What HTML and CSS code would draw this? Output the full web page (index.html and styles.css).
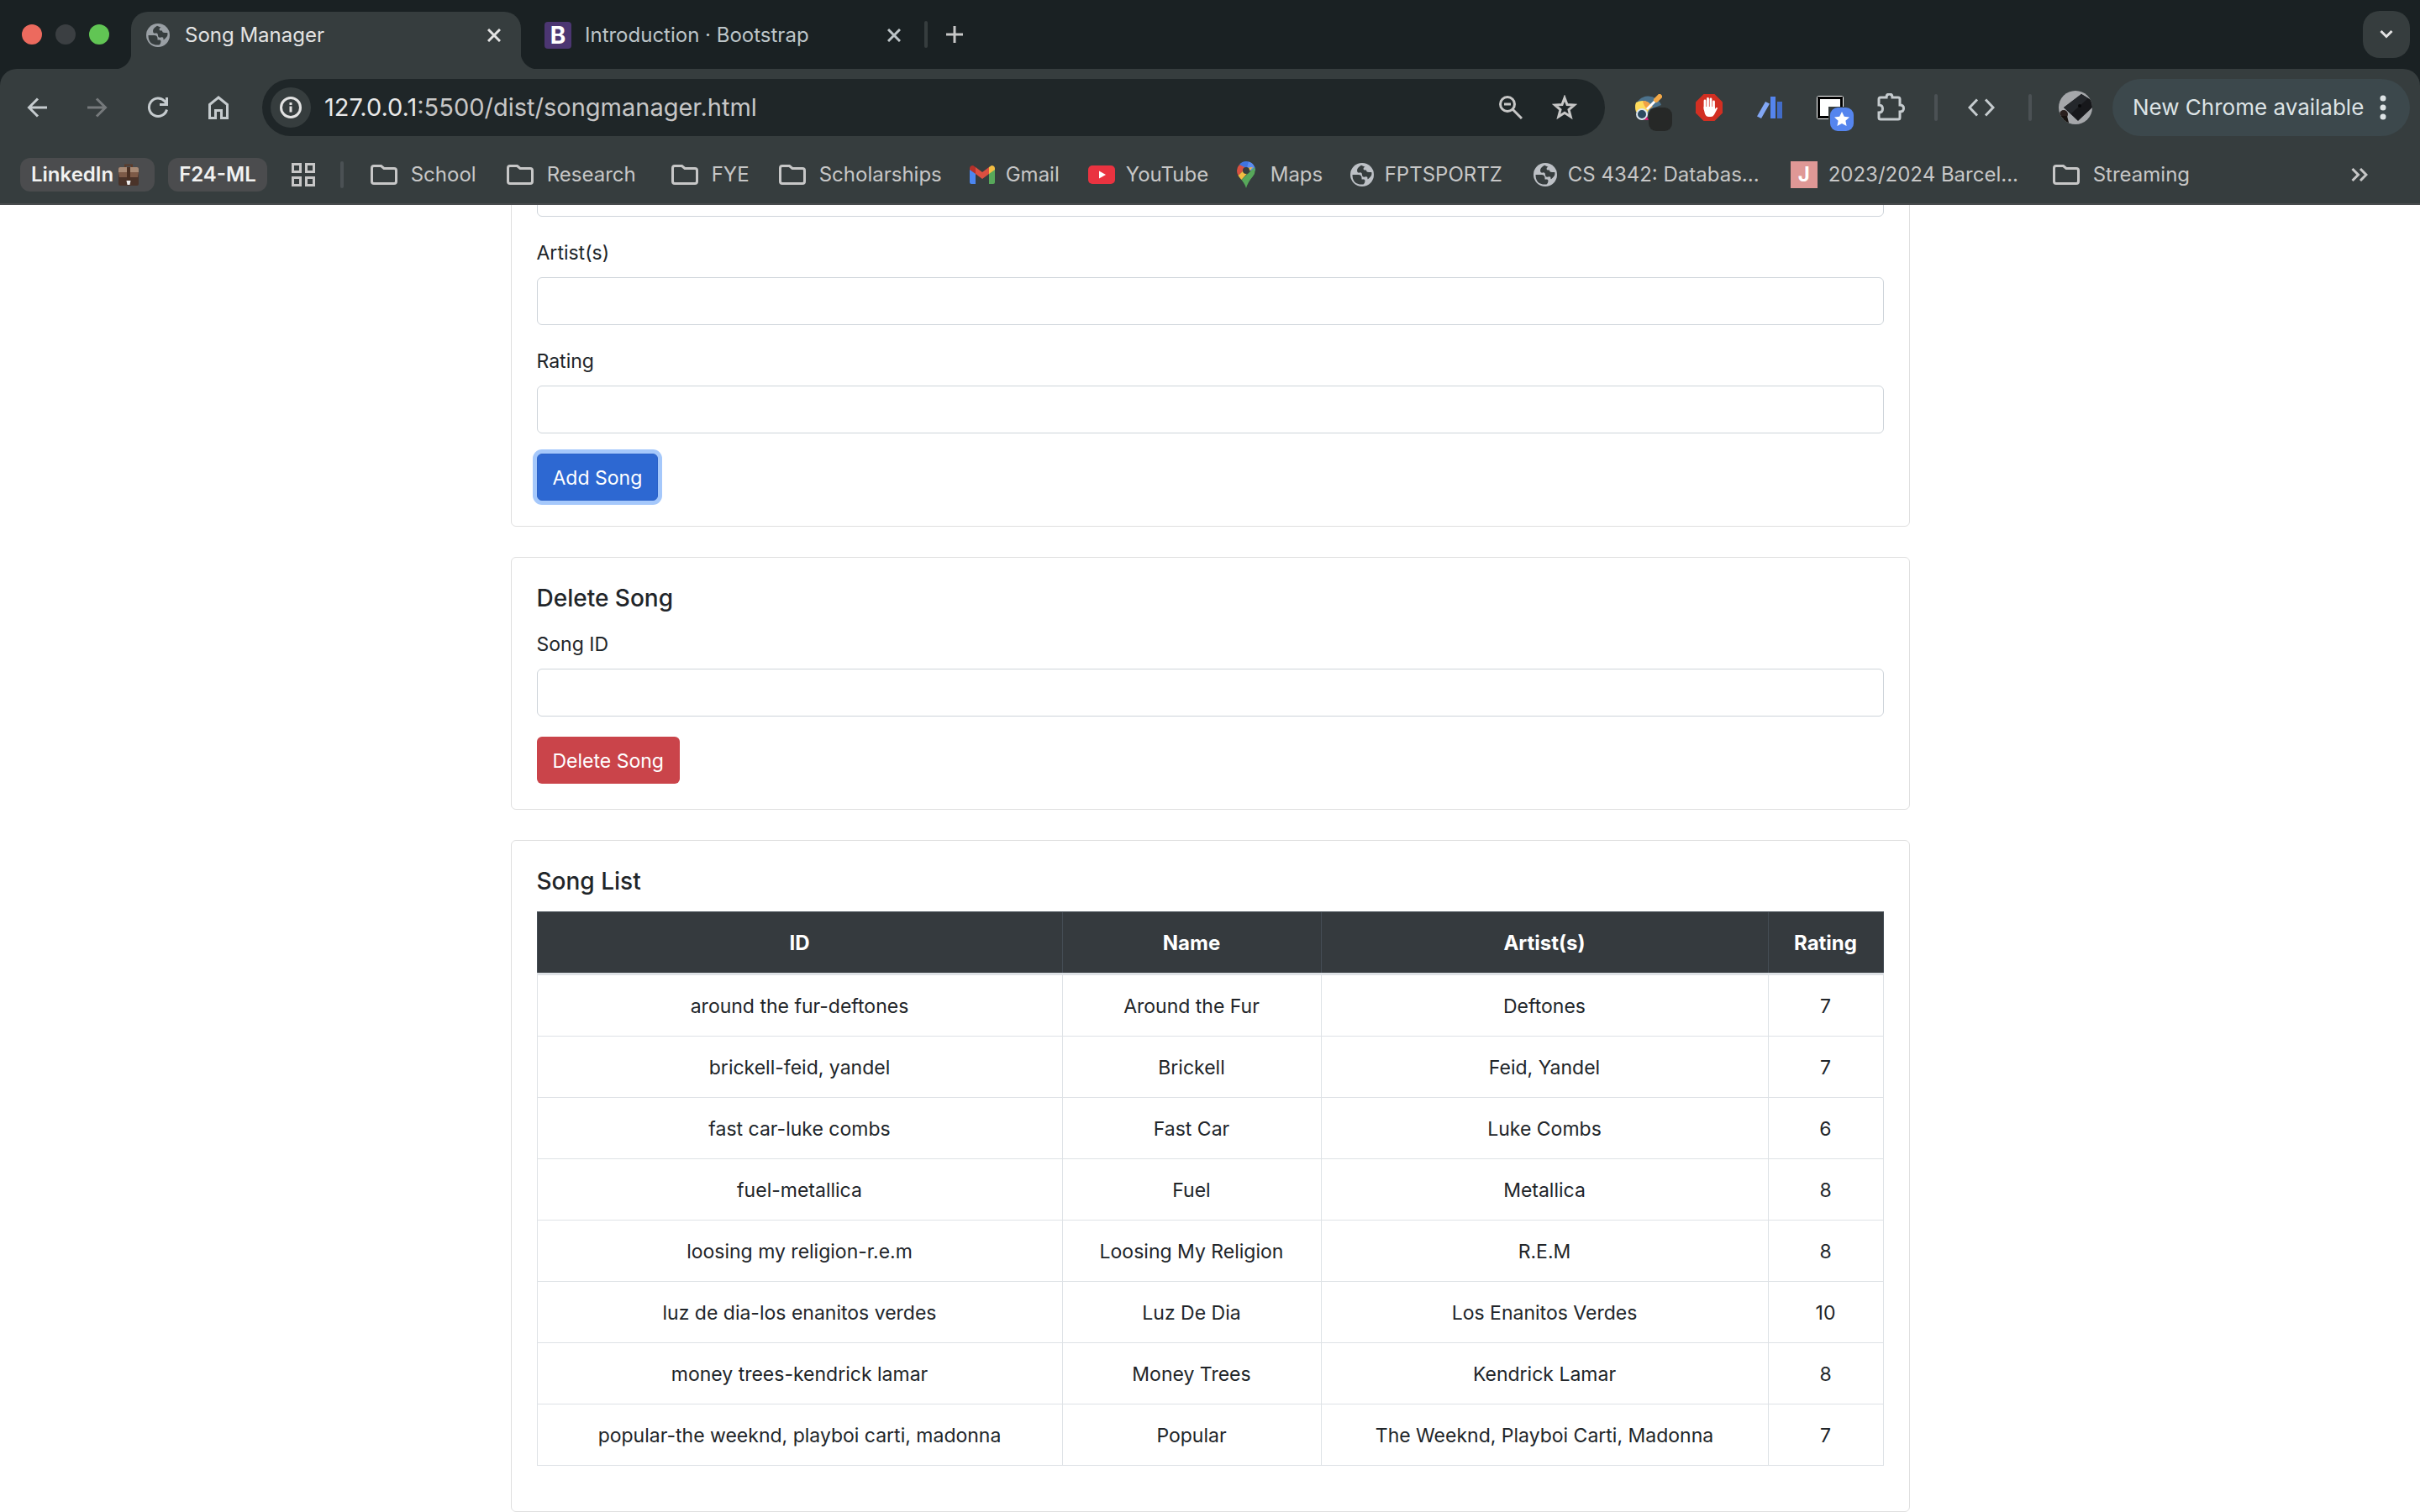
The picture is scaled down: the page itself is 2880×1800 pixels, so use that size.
FILE: index.html
```html
<!DOCTYPE html>
<html lang="en">
<head>
<meta charset="utf-8">
<title>Song Manager</title>
<link rel="stylesheet" href="styles.css">
</head>
<body>
<svg class="defs" aria-hidden="true">
  <symbol id="globe" viewBox="0 0 28 28">
    <circle cx="14" cy="14" r="14" fill="currentColor"/>
    <path class="land" d="M2.500 14h7q4 0 4 4v1.500h2.500q1.500 0 1.500 2t-2 4q-13 1-13-11.500z"/>
    <path class="land" d="M13 2.800q-5 3-5 6.200t3 2.500t3 2.500t3.500 2.500t3 2t4.500-3.500q.8-2.200.3-4h-3.300q-3 0-3-2.500q-3.500.5-3.500-1.500t2-2.200z"/>
  </symbol>
  <symbol id="folder" viewBox="0 0 32 24">
    <path d="M1.500 4v16q0 2.500 2.500 2.500h24q2.500 0 2.500-2.500v-13q0-2.500-2.500-2.500h-12l-3.500-3h-8.500q-2.500 0-2.500 2.500z" fill="none" stroke="currentColor" stroke-width="3"/>
  </symbol>
  <symbol id="cross" viewBox="0 0 16 16">
    <path d="M1 1l14 14M15 1l-14 14" stroke="currentColor" stroke-width="3"/>
  </symbol>
</svg>

<header class="browser">
  <div class="tabstrip">
    <div class="lights">
      <span class="light close"></span><span class="light idle"></span><span class="light grow"></span>
    </div>
    <div class="tab active">
      <svg class="favicon muted" width="28" height="28"><use href="#globe"/></svg>
      <span class="tab-title">Song Manager</span>
      <button class="plain" aria-label="Close tab"><svg width="16" height="16"><use href="#cross"/></svg></button>
    </div>
    <div class="tab">
      <span class="boot">B</span>
      <span class="tab-title">Introduction · Bootstrap</span>
      <button class="plain" aria-label="Close tab"><svg width="16" height="16"><use href="#cross"/></svg></button>
    </div>
    <span class="rule"></span>
    <button class="plain new-tab" aria-label="New tab"><svg width="20" height="20" viewBox="0 0 20 20"><path d="M10 0v20M0 10h20" stroke="currentColor" stroke-width="3"/></svg></button>
    <button class="tab-search" aria-label="Search tabs"><svg width="16" height="12" viewBox="0 0 16 12"><path d="M1.500 2l6.500 6.500l6.500-6.500" fill="none" stroke="currentColor" stroke-width="3"/></svg></button>
  </div>

  <div class="toolbar">
    <button class="tool" aria-label="Back"><svg width="24" height="24" viewBox="0 0 24 24"><path d="M24 12H3M13 1.500L2.500 12L13 22.500" fill="none" stroke="currentColor" stroke-width="3"/></svg></button>
    <button class="tool dim" aria-label="Forward"><svg width="24" height="24" viewBox="0 0 24 24"><path d="M0 12h21M11 1.500L21.500 12L11 22.500" fill="none" stroke="currentColor" stroke-width="3"/></svg></button>
    <button class="tool" aria-label="Reload"><svg width="26" height="26" viewBox="0 0 26 26"><path d="M23.500 15.500A10.700 10.700 0 1 1 21 5.500l2.500 3M23.500 1v8.500h-8.500" fill="none" stroke="currentColor" stroke-width="3"/></svg></button>
    <button class="tool" aria-label="Home"><svg width="24" height="28" viewBox="0 0 24 28"><path d="M1.500 10.500L12 2l10.500 8.500V26.500h-7v-9h-7v9h-7z" fill="none" stroke="currentColor" stroke-width="3"/></svg></button>
    <div class="omnibox">
      <button class="site-info" aria-label="Site information"><svg width="26" height="26" viewBox="0 0 26 26"><circle cx="13" cy="13" r="11.500" fill="none" stroke="currentColor" stroke-width="3"/><path d="M13 11.500v7M13 7v3" stroke="currentColor" stroke-width="3"/></svg></button>
      <div class="url"><span class="host">127.0.0.1</span>:5500/dist/songmanager.html</div>
      <button class="in-box" aria-label="Zoom"><svg width="28" height="28" viewBox="0 0 28 28"><circle cx="10" cy="10" r="8.500" fill="none" stroke="currentColor" stroke-width="3"/><path d="M6 10h8M16 16l11 11" stroke="currentColor" stroke-width="3"/></svg></button>
      <button class="in-box" aria-label="Bookmark this page"><svg width="30" height="30" viewBox="0 0 30 30"><path d="M15 3.500l3 8l8.500.5l-6.500 5.500l2.200 8.500l-7.200-4.700l-7.200 4.700l2.200-8.500l-6.500-5.500l8.500-.5z" fill="none" stroke="currentColor" stroke-width="3"/></svg></button>
    </div>
    <div class="extensions">
      <button class="tool" aria-label="Palette extension"><svg width="32" height="32" viewBox="0 0 32 32"><path d="M0 15A16 15 0 0 1 31 13L18 18L13 28L6 28Q0 22 0 15z" fill="#4d738d"/><path d="M1 10q8-4 15 0l4 5l-4 4l-3 6l-6-1l-6-3q-2-6 0-11z" fill="#ffdc5c"/><path d="M9 8q6 0 9 4l3 3l-6 4q-5-5-6-11z" fill="#f2a145"/><circle cx="8" cy="24" r="6" fill="#2d4a60" stroke="#dfe8ef" stroke-width="2"/><path d="M14 18L25 7" stroke="#fff" stroke-width="3"/><path d="M25 7l4-4" stroke="#f3a847" stroke-width="6" stroke-linecap="round"/><path d="M11 31h5l-2-4z" fill="#d81b78"/></svg><span class="badge dark"></span></button>
      <button class="tool" aria-label="Ad blocker"><svg width="32" height="32" viewBox="0 0 32 32"><path d="M9.500 0h13L32 9.500v13L22.500 32h-13L0 22.500v-13z" fill="#d22f22"/><path d="M11 18V8M14.500 17V5.500M18 17V6M21.500 18V9" stroke="#fff" stroke-width="2.800" stroke-linecap="round"/><path d="M9.600 15h13.300v3l1.600-2q1.500-.5 1.500 1l-4 7.500q-1.500 2.500-4 2.500h-2.500q-3 0-4.500-3.500q-1.400-4-1.400-8.500z" fill="#fff"/></svg></button>
      <button class="tool" aria-label="Library"><svg width="30" height="28" viewBox="0 0 30 28"><path d="M10 7l5 2.500L5 27L0 24.500z" fill="#82a7f4"/><path d="M16 1h6v26h-6z" fill="#5585ee"/><path d="M24 7h6v20h-6z" fill="#426cc8"/></svg></button>
      <button class="tool" aria-label="Picture in picture"><svg width="32" height="28" viewBox="0 0 32 28"><rect width="32" height="28" rx="3" fill="#fff"/><rect x="2.500" y="2.500" width="27" height="23" fill="#fff" stroke="#000" stroke-width="3"/><path class="land" d="M14 13h18v15H14z"/></svg><span class="badge blue"><svg width="20" height="20" viewBox="0 0 20 20"><path d="M10 1l2.800 5.800l6.200.7l-4.600 4.200l1.200 6.300l-5.600-3.100l-5.600 3.100l1.200-6.300l-4.600-4.200l6.200-.7z" fill="#fff"/></svg></span></button>
      <button class="tool" aria-label="Extensions"><svg width="34" height="34" viewBox="0 0 34 34"><path d="M3 14V7q0-2 2-2h7q0-4 3.500-4T19 5h7q2 0 2 2v7q4.500 0 4.500 4T28 22v7q0 2-2 2H5q-2 0-2-2v-6q4.500 0 4.500-4.500T3 14z" fill="none" stroke="currentColor" stroke-width="3"/></svg></button>
    </div>
    <span class="rule soft"></span>
    <button class="tool wide" aria-label="Developer tools"><svg width="32" height="22" viewBox="0 0 32 22"><path d="M11 1.500L2 11l9 9.500M21 1.500L30 11l-9 9.500" fill="none" stroke="currentColor" stroke-width="3"/></svg></button>
    <span class="rule soft"></span>
    <button class="avatar" aria-label="Profile"><svg width="40" height="40" viewBox="0 0 40 40"><clipPath id="disc"><circle cx="20" cy="20" r="20"/></clipPath><g clip-path="url(#disc)"><path d="M0 0h40v40H0z" fill="#a5a7aa"/><path d="M6 20L27 4L42 13V18L23 36z" fill="#17181b"/><path d="M6 20L27 4l8 5L15 27z" fill="#24272b"/><circle cx="6" cy="28" r="5" fill="#2a1f1d"/><path d="M3 30l5 8h4l-2-8z" fill="#17120f"/><circle cx="25" cy="18" r="2" fill="#08090a"/></g></svg></button>
    <button class="update">New Chrome available<svg width="8" height="30" viewBox="0 0 8 30"><circle cx="4" cy="4" r="3.500"/><circle cx="4" cy="15" r="3.500"/><circle cx="4" cy="26" r="3.500"/></svg></button>
  </div>

  <nav class="bookmarks">
    <button class="chip">LinkedIn <svg width="24" height="26" viewBox="0 0 24 26"><path d="M8 4V1.500h8V4" fill="none" stroke="#5b3b2a" stroke-width="2"/><rect y="4" width="24" height="22" rx="2" fill="#4a3329"/><path d="M0 6q0-2 2-2h20q2 0 2 2v4H0z" fill="#a88a75"/><path d="M0 10h24l-1 6H1z" fill="#7d5a47"/><path d="M10 4h4v15h-4z" fill="#4b3023"/><path d="M9.500 20h5l-1 5h-3z" fill="#eee"/></svg></button>
    <button class="chip">F24-ML</button>
    <button class="apps" aria-label="Apps"><svg width="28" height="28" viewBox="0 0 28 28"><path d="M1.500 1.500h9v9h-9zM17.500 1.500h9v9h-9zM1.500 17.500h9v9h-9zM17.500 17.500h9v9h-9z" fill="none" stroke="currentColor" stroke-width="3"/></svg></button>
    <span class="rule soft"></span>
    <div class="marks">
      <a class="mark" href="#"><svg width="32" height="24"><use href="#folder"/></svg>School</a>
      <a class="mark" href="#"><svg width="32" height="24"><use href="#folder"/></svg>Research</a>
      <a class="mark" href="#"><svg width="32" height="24"><use href="#folder"/></svg>FYE</a>
      <a class="mark" href="#"><svg width="32" height="24"><use href="#folder"/></svg>Scholarships</a>
      <a class="mark site" href="#"><svg width="30" height="22" viewBox="0 0 30 22"><path d="M0 3v17q0 2 2 2h5V9z" fill="#4c86f0"/><path d="M30 3v17q0 2-2 2h-5V9z" fill="#57a85a"/><path d="M0 4q0-4 4-4l3 2v8L0 5z" fill="#b6312a"/><path d="M30 4q0-4-4-4l-3 2v8l7-5z" fill="#f3bd42"/><path d="M7 2l8 6l8-6v8l-8 6l-8-6z" fill="#dc4f40"/></svg>Gmail</a>
      <a class="mark site" href="#"><svg width="32" height="22" viewBox="0 0 32 22"><rect width="32" height="22" rx="5" fill="#ea3340"/><path d="M13 6.500v9l8-4.500z" fill="#fff"/></svg>YouTube</a>
      <a class="mark maps" href="#"><svg width="22" height="32" viewBox="0 0 22 32"><path d="M3 4Q6 0 11 0t8 4l-8 7z" fill="#3f74e0"/><path d="M14 .5Q22 3 22 11L11 11z" fill="#5a8bf0"/><path d="M3 4Q0 7 0 11q0 3 1.500 6L11 8z" fill="#d85040"/><path d="M1.500 17q2 3 4 5L19 7L11 8z" fill="#f3bd42"/><path d="M21 7q2 6-2 11q-6 7-8 14q-1-4-5.500-10z" fill="#57a85a"/><circle class="land" cx="11" cy="11" r="4"/></svg>Maps</a>
      <a class="mark site" href="#"><svg class="pale" width="28" height="28"><use href="#globe"/></svg>FPTSPORTZ</a>
      <a class="mark site" href="#"><svg class="pale" width="28" height="28"><use href="#globe"/></svg>CS 4342: Databas...</a>
      <a class="mark site" href="#"><span class="letter">J</span>2023/2024 Barcel...</a>
      <a class="mark" href="#"><svg width="32" height="24"><use href="#folder"/></svg>Streaming</a>
    </div>
    <button class="plain more" aria-label="More bookmarks"><svg width="20" height="16" viewBox="0 0 20 16"><path d="M1.500 1l7 7l-7 7M11 1l7 7l-7 7" fill="none" stroke="currentColor" stroke-width="3"/></svg></button>
  </nav>
</header>

<main class="viewport">
  <div class="container">
    <form class="card">
      <div class="group"><input class="field" type="text" aria-label="Song name"></div>
      <div class="group"><label for="artist">Artist(s)</label><input class="field" id="artist" type="text"></div>
      <div class="group"><label for="rating">Rating</label><input class="field" id="rating" type="text"></div>
      <button class="btn add" type="button">Add Song</button>
    </form>
    <form class="card">
      <h5>Delete Song</h5>
      <div class="group"><label for="song-id">Song ID</label><input class="field" id="song-id" type="text"></div>
      <button class="btn delete" type="button">Delete Song</button>
    </form>
    <section class="card">
      <h5>Song List</h5>
      <table class="songs">
        <colgroup><col class="c-id"><col class="c-name"><col class="c-artist"><col></colgroup>
        <thead><tr><th>ID</th><th>Name</th><th>Artist(s)</th><th>Rating</th></tr></thead>
        <tbody>
          <tr><td>around the fur-deftones</td><td>Around the Fur</td><td>Deftones</td><td>7</td></tr>
          <tr><td>brickell-feid, yandel</td><td>Brickell</td><td>Feid, Yandel</td><td>7</td></tr>
          <tr><td>fast car-luke combs</td><td>Fast Car</td><td>Luke Combs</td><td>6</td></tr>
          <tr><td>fuel-metallica</td><td>Fuel</td><td>Metallica</td><td>8</td></tr>
          <tr><td>loosing my religion-r.e.m</td><td>Loosing My Religion</td><td>R.E.M</td><td>8</td></tr>
          <tr><td>luz de dia-los enanitos verdes</td><td>Luz De Dia</td><td>Los Enanitos Verdes</td><td>10</td></tr>
          <tr><td>money trees-kendrick lamar</td><td>Money Trees</td><td>Kendrick Lamar</td><td>8</td></tr>
          <tr><td>popular-the weeknd, playboi carti, madonna</td><td>Popular</td><td>The Weeknd, Playboi Carti, Madonna</td><td>7</td></tr>
        </tbody>
      </table>
    </section>
  </div>
</main>
</body>
</html>
```
FILE: styles.css
```css
* { box-sizing: border-box; }

body {
  margin: 0;
  height: 100vh;
  display: flex;
  flex-direction: column;
  overflow: hidden;
  background: #fff;
  color: #212529;
  font-family: Inter, "Liberation Sans", sans-serif;
  font-size: 23px;
  line-height: 36px;
}

button { font: inherit; border: 0; padding: 0; background: none; color: inherit; }
svg { display: block; flex: none; fill: currentColor; }
.defs { position: absolute; width: 0; height: 0; }

/* Browser frame */
.browser { flex: none; background: #1a2123; color: #c7c7c7; font-size: 24px; white-space: nowrap; }
.rule { width: 4px; height: 32px; border-radius: 2px; background: #363d3e; flex: none; }
.rule.soft { background: #4b5154; }
.plain, .tool { display: flex; align-items: center; justify-content: center; }

.tabstrip { display: flex; align-items: center; height: 82px; padding: 0 12px 0 26px; }
.lights { display: flex; gap: 16px; width: 130px; }
.light { width: 24px; height: 24px; border-radius: 50%; }
.light.close { background: #ec6a5e; }
.light.idle { background: #3b3f42; }
.light.grow { background: #61c554; }

.tab { display: flex; align-items: center; gap: 16px; width: 480px; height: 68px; padding: 0 28px 12px 28px; align-self: flex-end; color: #bdc5c8; }
.tab.active { position: relative; width: 464px; gap: 18px; padding: 0 24px 12px 18px; background: #363d3e; color: #e3e3e3; border-radius: 20px 20px 0 0; }
.tab.active::before, .tab.active::after { content: ""; position: absolute; bottom: 0; width: 20px; height: 20px; }
.tab.active::before { right: 100%; background: radial-gradient(circle at 0 0, #1a2123 20px, #363d3e 21px); }
.tab.active::after { left: 100%; background: radial-gradient(circle at 100% 0, #1a2123 20px, #363d3e 21px); }
.tab-title { flex: 1; }
.muted { color: #9aa0a5; }
.pale { color: #bdc1c6; }
.land { fill: #363d3e; }
.boot { width: 32px; height: 32px; border-radius: 4px; background: #4c3672; color: #fff; font-weight: 700; font-size: 28px; line-height: 32px; text-align: center; }
.new-tab { width: 64px; height: 60px; }
.tab-search { display: flex; align-items: center; justify-content: center; margin-left: auto; width: 56px; height: 56px; border-radius: 20px; background: #363d3e; color: #e3e3e3; }

.toolbar { display: flex; align-items: center; height: 92px; padding: 0 12px 0 8px; background: #363d3e; border-radius: 20px 20px 0 0; color: #c5cbce; }
.tool { position: relative; flex: none; width: 72px; height: 56px; }
.tool.dim { color: #75797b; }
.tool.wide { width: 108px; padding-right: 4px; }
.omnibox { display: flex; align-items: center; flex: 1; margin: 0 16px; height: 68px; padding: 0 16px 0 10px; border-radius: 34px; background: #1f2628; color: #c7c7c7; font-size: 29px; }
.site-info { display: flex; align-items: center; justify-content: center; width: 48px; height: 48px; border-radius: 50%; background: #363d3e; color: #e3e3e3; }
.url { flex: 1; margin-left: 16px; }
.host { color: #e8e8e8; }
.in-box { display: flex; align-items: center; justify-content: center; width: 64px; height: 56px; }
.extensions { display: flex; margin-right: 16px; }
.badge { position: absolute; left: 36px; top: 28px; width: 28px; height: 28px; border-radius: 9px; display: flex; align-items: center; justify-content: center; }
.badge.dark { background: #262827; }
.badge.blue { background: #5585ee; }
.avatar { margin: 0 24px 0 32px; flex: none; }
.update { display: flex; align-items: center; justify-content: space-between; flex: none; width: 354px; height: 68px; padding: 0 28px 0 24px; border-radius: 34px; background: #3c484c; color: #dde3e5; font-size: 26px; }

.bookmarks { display: flex; align-items: center; height: 70px; padding: 0 62px 0 24px; background: #363d3e; border-bottom: 2px solid #484b4d; }
.chip { display: flex; align-items: center; gap: 6px; height: 40px; margin-right: 16px; padding: 0 13px; border-radius: 12px; background: #4b4c4e; color: #f1f1f1; font-weight: 600; }
.chip svg { margin-right: 6px; }
.apps { margin: 0 30px 0 13px; }
.marks { flex: 1; margin-left: 32px; display: grid; grid-template-columns: 162px 196px 128px 227px 141px 172px 140px 218px 306px 312px auto; }
.mark { display: flex; align-items: center; gap: 16px; color: inherit; text-decoration: none; }
.mark.site { gap: 13px; }
.mark.maps { gap: 18px; padding-left: 5px; }
.letter { width: 32px; height: 32px; background: #df9896; color: #fff; font-weight: 700; line-height: 32px; text-align: center; }

/* Page */
.viewport { flex: 1; min-height: 0; display: flex; flex-direction: column; justify-content: flex-end; overflow: hidden; }
.container { width: 100%; max-width: 1665px; margin: 0 auto; display: grid; gap: 36px; }
.card { min-width: 0; padding: 30px; border: 1px solid #dfdfdf; border-radius: 6px; }
h5 { margin: 0 0 18px; font-size: 28px; line-height: 36px; font-weight: 500; }
.group { margin-bottom: 24px; }
label { display: block; padding-top: 1px; margin-bottom: 11px; }
.field { display: block; width: 100%; height: 57px; padding: 9px 18px; border: 1px solid #ced4da; border-radius: 6px; background: #fff; font: inherit; }
.btn { display: block; height: 56px; padding: 1px 19px 0; border-radius: 6px; color: #fff; }
.add { background: #2d68d2; border: 1px solid #2a61c8; padding: 1px 18px 0; box-shadow: 0 0 0 5px #a5c8fb; }
.delete { background: #ca444a; }

.songs { width: 100%; margin-bottom: 24px; border-collapse: collapse; table-layout: fixed; text-align: center; }
.c-id { width: 625px; }
.c-name { width: 308px; }
.c-artist { width: 532px; }
.songs td, .songs th { padding: 19px 0 17px; border: 1px solid #dee2e6; }
.songs th { background: #353a3e; color: #fff; font-size: 24px; font-weight: 700; border-color: #454d55; border-bottom: 3px solid #dee2e6; }
```
